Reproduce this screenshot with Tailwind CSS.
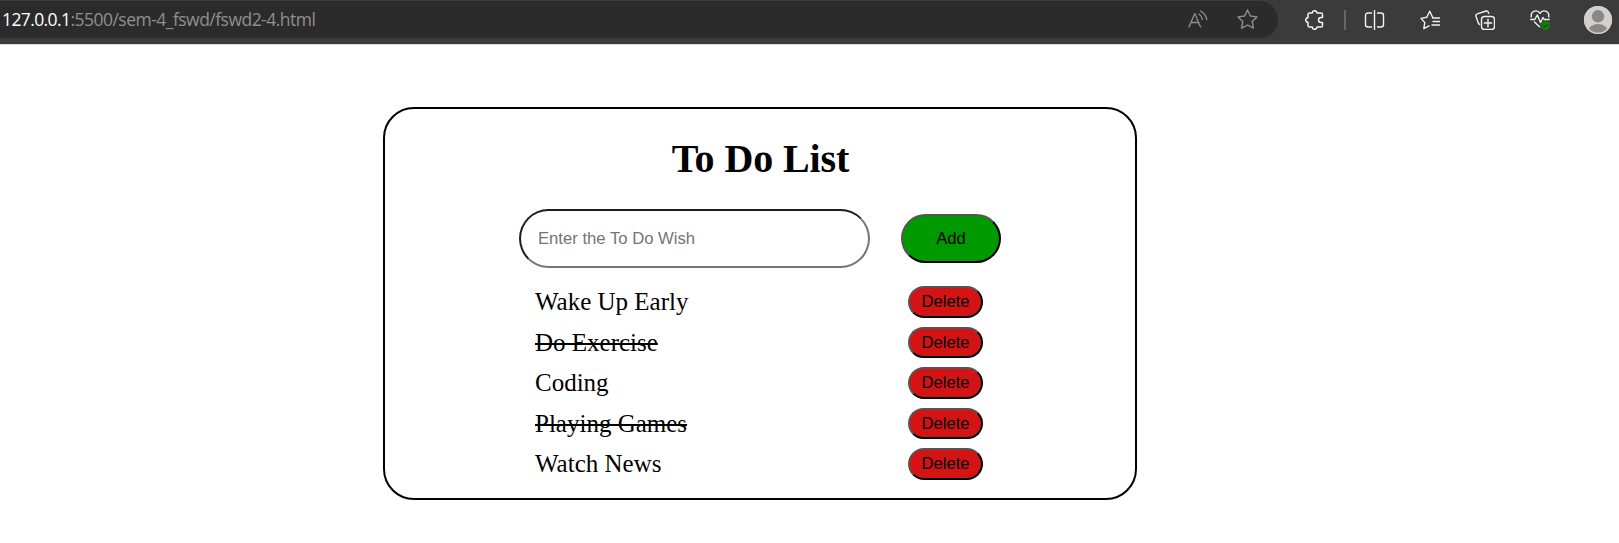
<!DOCTYPE html>
<html lang="en">
<head>
<meta charset="utf-8">
<title>To Do List</title>
<script src="https://cdn.jsdelivr.net/npm/@tailwindcss/browser@4"></script>
</head>
<body class="bg-white h-[543px] overflow-hidden text-black font-['Liberation_Serif',serif]">
<header class="flex h-[45px] bg-[#3b3b3b] border-b border-[#dad7d6] pt-px">
  <div class="flex items-center w-[1278px] h-[37px] bg-[#2b2b2b] rounded-r-full pl-[2px] text-[#8f8f8f]">
    <div class="pb-px font-['Open_Sans','Noto_Sans',sans-serif] text-[17.5px] leading-[24px] tracking-[-0.52px] whitespace-nowrap"><span class="text-white tracking-[-0.6px]">127.0.0.1</span>:5500/sem-4_fswd/fswd2-4.html</div>
    <svg class="ml-auto mr-[29px] shrink-0" width="20" height="20" viewBox="0 0 20 20" fill="none" stroke="currentColor" stroke-width="1.300" stroke-linecap="round" stroke-linejoin="round"><path d="M1 17 6.800 3.500 12.500 17M3 12.500h7.800"/><path d="M11 4q3 2 3.300 5.500M12.500 1q5 2.500 6.300 8.500"/></svg>
    <svg class="mr-[20px] shrink-0" width="21" height="21" viewBox="0 0 21 21" fill="none" stroke="currentColor" stroke-width="1.400" stroke-linejoin="round"><path d="m10.500 1 2.900 6 6.600.9-4.800 4.600 1.200 6.600-5.900-3.100-5.900 3.100 1.200-6.600L1 7.900l6.600-.9z"/></svg>
  </div>
  <div class="flex items-center h-[37px] pl-[27px] text-[#f2f2f2]">
    <svg width="20" height="20" viewBox="0 0 20 20" fill="none" stroke="currentColor" stroke-width="1.500" stroke-linejoin="round"><path d="M4.500 3H7.300a2.300 2.300 0 0 1 4.600 0H16a1.500 1.500 0 0 1 1.500 1.500V7.500H16a2.500 2.500 0 0 0 0 5h1.500v3A1.500 1.500 0 0 1 16 17h-4.100a2.300 2.300 0 0 1-4.600 0H4.500A1.500 1.500 0 0 1 3 15.500V12.300a2.300 2.300 0 0 1 0-4.600V4.500A1.500 1.500 0 0 1 4.500 3z"/></svg>
    <div class="w-[2px] h-[20px] bg-[#666] ml-[19px]"></div>
    <svg class="ml-[17px]" width="22" height="20" viewBox="0 0 22 20" fill="none" stroke="currentColor" stroke-width="1.400"><path d="M9 3H5a2.500 2.500 0 0 0-2.500 2.500v9A2.500 2.500 0 0 0 5 17h4M14 3h4a2.500 2.500 0 0 1 2.500 2.500v9A2.500 2.500 0 0 1 18 17h-4M11.500 0v20"/></svg>
    <svg class="ml-[35px]" width="20" height="20" viewBox="0 0 20 20" fill="none" stroke="currentColor" stroke-width="1.400" stroke-linecap="round" stroke-linejoin="round"><path d="m9 15.800-5.200 2.800 1-6L1 8.400l5.800-1.100L9.700 1.200l2.900 6.100M12.500 8h7M13 11.500h6.500M12 15h7.500"/></svg>
    <svg class="ml-[35px]" width="20" height="20" viewBox="0 0 20 20" fill="none" stroke="currentColor" stroke-width="1.400" stroke-linecap="round" stroke-linejoin="round"><path d="M4.500 14.500 3.300 13 1 6.500a2 2 0 0 1 1.300-2.700L11 1a2 2 0 0 1 2.300 1.200l.4 1.200"/><rect x="6.500" y="6.500" width="13" height="13" rx="3"/><path d="M13 9.300v7.400M9.300 13h7.400"/></svg>
    <svg class="ml-[35px]" width="21" height="21" viewBox="0 0 21 21" fill="none" stroke="currentColor" stroke-width="1.400" stroke-linecap="round" stroke-linejoin="round"><path d="M1.200 8C.5 1.500 7.500.2 10 4.300 12.500.2 19.500 1.500 18.800 8M.8 10.500h4L7.300 6l3.200 7.500 2.500-5 1.200 2h5M4.500 13l5 4.800"/><circle cx="15.500" cy="16.500" r="4.500" fill="#107c10" stroke="none"/><path d="m13.600 16.700 1.300 1.200 2.500-2.600" stroke="#063d06" stroke-width="1"/></svg>
    <svg class="ml-[33px]" width="28" height="28" viewBox="0 0 28 28"><defs><clipPath id="avatar"><circle cx="14" cy="14" r="14"/></clipPath></defs><g clip-path="url(#avatar)"><path fill="#d2d0ce" d="M0 0h28v28H0z"/><circle cx="14" cy="10.300" r="6.200" fill="#8a8886"/><ellipse cx="14" cy="26" rx="10" ry="8" fill="#8a8886"/></g><circle cx="14" cy="14" r="13.300" fill="none" stroke="#d2d0ce" stroke-width="1.400"/></svg>
  </div>
</header>
<main class="flex flex-col w-[754px] h-[393px] mt-[62px] ml-[383px] border-2 border-black rounded-[31px]">
  <h1 class="mt-[27px] pl-px text-center text-[40px] leading-[46px] font-bold tracking-[-0.1px]">To Do List</h1>
  <form class="flex items-center mt-[27px] pl-[134px] gap-[31px] font-['Liberation_Sans',sans-serif]">
    <input class="w-[351px] h-[59px] rounded-full border-2 border-t-[#1c1c1f] border-l-[#1c1c1f] border-r-[#757575] border-b-[#757575] px-[17px] text-[16.667px] placeholder:text-[#757575]" placeholder="Enter the To Do Wish">
    <button type="button" class="w-[100px] h-[49px] rounded-full border-2 border-t-[#555] border-l-[#555] border-r-black border-b-black bg-[#009900] text-[16.667px]">Add</button>
  </form>
  <ul class="mt-[13.5px] ml-[150px] w-[448px] text-[25px] leading-[28px]">
    <li class="flex items-center justify-between h-[40.5px]"><span>Wake Up Early</span><button class="w-[75px] h-[31.5px] rounded-full border-2 border-t-[#555] border-l-[#555] border-r-black border-b-black bg-[#d41414] font-['Liberation_Sans',sans-serif] text-[16.667px] leading-[19px]">Delete</button></li>
    <li class="flex items-center justify-between h-[40.5px]"><span class="pt-px line-through decoration-2">Do Exercise</span><button class="w-[75px] h-[31.5px] rounded-full border-2 border-t-[#555] border-l-[#555] border-r-black border-b-black bg-[#d41414] font-['Liberation_Sans',sans-serif] text-[16.667px] leading-[19px]">Delete</button></li>
    <li class="flex items-center justify-between h-[40.5px]"><span>Coding</span><button class="w-[75px] h-[31.5px] rounded-full border-2 border-t-[#555] border-l-[#555] border-r-black border-b-black bg-[#d41414] font-['Liberation_Sans',sans-serif] text-[16.667px] leading-[19px]">Delete</button></li>
    <li class="flex items-center justify-between h-[40.5px]"><span class="pt-px line-through decoration-2">Playing Games</span><button class="w-[75px] h-[31.5px] rounded-full border-2 border-t-[#555] border-l-[#555] border-r-black border-b-black bg-[#d41414] font-['Liberation_Sans',sans-serif] text-[16.667px] leading-[19px]">Delete</button></li>
    <li class="flex items-center justify-between h-[40.5px]"><span>Watch News</span><button class="w-[75px] h-[31.5px] rounded-full border-2 border-t-[#555] border-l-[#555] border-r-black border-b-black bg-[#d41414] font-['Liberation_Sans',sans-serif] text-[16.667px] leading-[19px]">Delete</button></li>
  </ul>
</main>
</body>
</html>
